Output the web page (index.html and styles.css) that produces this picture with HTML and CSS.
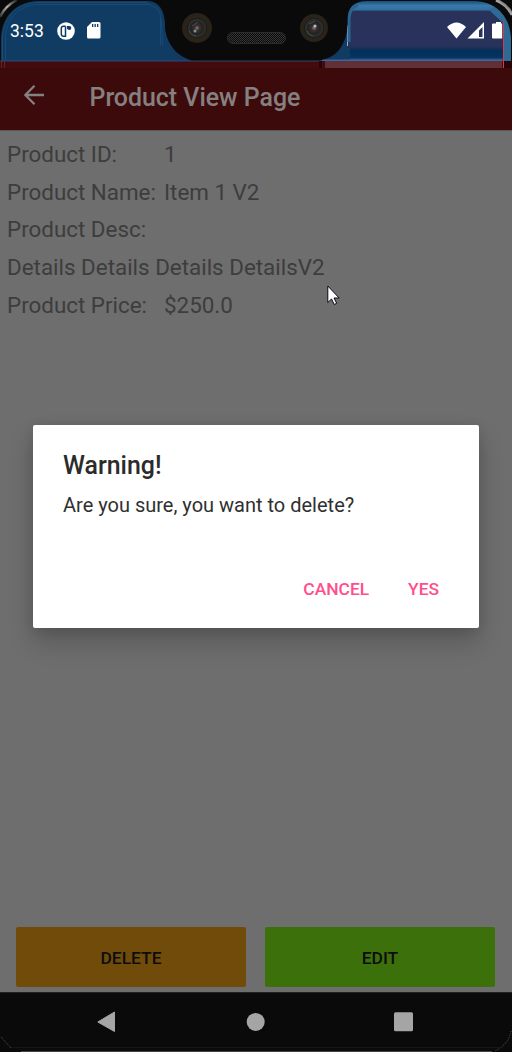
FILE: index.html
```html
<!DOCTYPE html>
<html lang="en">
<head>
<meta charset="utf-8">
<title>Product View Page</title>
<link rel="stylesheet" href="styles.css">
</head>
<body>
<div class="phone">
  <header class="status">
    <svg class="status-art" width="512" height="68" viewBox="0 0 512 68">
      <defs>
        <linearGradient id="glass" x1="0" y1="0" x2="0" y2="1">
          <stop offset="0" stop-color="#164f7e"/><stop offset=".08" stop-color="#3a7aa9"/><stop offset=".15" stop-color="#30709d"/><stop offset=".17" stop-color="#28325a"/><stop offset=".75" stop-color="#28325a"/><stop offset=".83" stop-color="#032f58"/><stop offset=".94" stop-color="#053463"/><stop offset="1" stop-color="#34689b"/>
        </linearGradient>
        <linearGradient id="rim" x1="0" y1="1" x2="1" y2="0">
          <stop offset="0" stop-color="#333"/><stop offset=".5" stop-color="#aaa"/><stop offset="1" stop-color="#222"/>
        </linearGradient>
        <radialGradient id="lens"><stop offset="0" stop-color="#8b8178"/><stop offset=".25" stop-color="#3b302e"/><stop offset=".6" stop-color="#202225"/><stop offset=".85" stop-color="#30302f"/><stop offset="1" stop-color="#111"/></radialGradient>
        <pattern id="mesh" width="2" height="2" patternUnits="userSpaceOnUse"><path fill="#363636" d="M0 0h1v1H0zM1 1h1v1H1z"/></pattern>
      </defs>
      <path fill="#0a0a0a" d="M0 0h512v68H0z"/>
      <path fill="none" stroke="url(#rim)" stroke-width="2.5" d="M0 17Q5 6 17 0"/>
      <path fill="none" stroke="url(#rim)" stroke-width="3" d="M496 0Q508 5 512 15"/>
      <path fill="#103b62" d="M1 68V38C2 17 15 2 38 1H149Q165 3 165 20V26Q166 50 192 61V68z"/>
      <path fill="none" stroke="#174b78" d="M2.500 61V38C4 17 16 3 38 2.500H146L158 9Q162 13 162.500 45M5.500 61V38C6 20 17 5 39 4.500H149M160.500 18V45"/>
      <path fill="url(#glass)" d="M320 61Q346 51 347 27V20Q348 1 367 1H474C499 2 511 19 511 40V61z"/>
      <path fill="#103b62" d="M320 61Q342 53 347 35V48H350V61z"/>
      <path fill="none" stroke="#8eb4d3" d="M347.500 25V46"/>
      <path fill="#2e6a95" d="M489 10L503 23V61H511V38Q509 15 494 7z"/>
      <path fill="none" stroke="#2a648e" stroke-width="3" d="M349 42V18Q350 7 358 5"/>
      <path fill="#430b0d" d="M0 61H512V68H0z"/>
      <path fill="#603039" d="M325 61H502V68H325z"/>
      <path fill="#2f5389" opacity=".8" d="M0 60.500H322V61.500H0z"/><path fill="#466398" d="M322 59.500H502V61H322z"/>
      <path fill="#290307" d="M319 61h3v7h-3zM504 61h8v7h-8z"/>
      <path fill="none" stroke="#d63a45" d="M503.500 22V68"/>
      <path fill="none" stroke="#60252d" d="M1.500 61v7M4.500 61v7"/>
      <path fill="#0a0a0a" d="M155 0H357Q347 4 347.500 20C348 42 338 60 317 60H196C178 60 165 43 165 23Q164 4 149 0z"/>
      <circle cx="197" cy="28" r="15" fill="#292319"/><circle cx="197" cy="28" r="10" fill="url(#lens)"/>
      <circle cx="314" cy="28" r="14" fill="#292319"/><circle cx="314" cy="28" r="10" fill="url(#lens)"/>
      <path fill="none" stroke="#4b4b4b" d="M189 31a8 8 0 0 0 7 5M192 26l6-4M307 31a8 8 0 0 0 6 5M309 24l6-3"/>
      <circle cx="195" cy="31" r="1.500" fill="#7f9195"/><circle cx="315" cy="26" r="1.500" fill="#bbb"/>
      <rect x="227.500" y="32.500" width="58" height="11" rx="5.500" fill="url(#mesh)" stroke="#2b2b2b"/>
    </svg>
    <div class="status-row">
      <span class="clock">3:53</span>
      <svg class="app-icon" width="18" height="18" viewBox="0 0 18 18"><circle cx="9" cy="9" r="8.800" fill="#fff"/><path fill="none" stroke="#103b62" stroke-width="1.500" d="M8.500 4.300H6.500Q4.300 4.300 4.300 6.500V12Q4.300 14.300 6.500 14.300H8.500V4.300"/><circle cx="12.300" cy="6" r="2" fill="#103b62"/><path fill="#103b62" d="M10 4h2v3h-2z"/></svg>
      <svg class="sd-icon" width="14" height="17" viewBox="0 0 14 17"><path fill="#fff" d="M5 0h7q1.500 0 1.500 1.500v13.500q0 1.500-1.500 1.500H1.500Q0 16.500 0 15V5z"/><path fill="#103b62" d="M5 2h1.300v3H5zM7.500 2h1.300v3H7.500zM10 2h1.300v3H10z"/></svg>
      <svg class="signals" width="56" height="18" viewBox="0 0 56 18"><path fill="#fff" d="M0 5Q9.500-4 19 5L9.500 16.500z"/><path fill="#fff" fill-rule="evenodd" d="M37 0V16.500H20.500zM35.500 5V15H32V8.500z"/><path fill="#fff" d="M46 1.500h3V0h5v1.500h1.200V16.500H46q-1 0-1-1V2.500q0-1 1-1z"/></svg>
    </div>
  </header>
  <div class="toolbar">
    <svg class="back" width="20" height="20" viewBox="0 0 20 20"><path fill="none" stroke="#858181" stroke-width="2.300" d="M20 10H1.500M10.500 .8L1.300 10l9.200 9.200"/></svg>
    <h1 class="title">Product View Page</h1>
  </div>
  <main class="content">
    <dl class="details">
      <dt>Product ID:</dt><dd>1</dd>
      <dt>Product Name:</dt><dd>Item 1 V2</dd>
      <dt class="wide">Product Desc:</dt>
      <dd class="wide">Details Details Details DetailsV2</dd>
      <dt>Product Price:</dt><dd>$250.0</dd>
    </dl>
    <div class="actions">
      <button class="btn delete">DELETE</button>
      <button class="btn edit">EDIT</button>
    </div>
  </main>
  <footer class="nav">
    <svg width="512" height="60" viewBox="0 0 512 60">
      <path fill="#a5a5a5" stroke="#a5a5a5" stroke-linejoin="round" d="M97.800 30L114.500 20V39.500z"/>
      <circle cx="255.700" cy="29.900" r="9" fill="#a5a5a5"/>
      <rect x="394" y="20.300" width="19" height="19" rx="1.500" fill="#a5a5a5"/>
      <path fill="none" stroke="#555" stroke-dasharray="1 1" d="M1 45l10 11M511 39Q509 52 495 59"/>
      <path fill="none" stroke="#161616" d="M11 55.500H503"/>
      <path fill="none" stroke="#444" d="M21 59.500H492"/>
    </svg>
  </footer>
  <section class="dialog" role="alertdialog">
    <h2 class="dialog-title">Warning!</h2>
    <p class="message">Are you sure, you want to delete?</p>
    <div class="dialog-actions"><button class="link cancel">CANCEL</button><button class="link yes">YES</button></div>
  </section>
  <svg class="cursor" width="14" height="21" viewBox="0 0 14 21"><path fill="#fff" stroke="#080818" d="M.8 1V17.500L4.500 14L7.300 19.500L9.700 18.300L7 13H12.200z"/></svg>
</div>
</body>
</html>
```
FILE: styles.css
```css
* { box-sizing: border-box; }
body { margin: 0; background: #000; font-family: Roboto, "Liberation Sans", sans-serif; }
.phone { position: relative; width: 512px; height: 1052px; display: flex; flex-direction: column; background: #6e6e6e; overflow: hidden; }
.status { position: relative; height: 68px; flex: none; }
.status-art { position: absolute; inset: 0; display: block; }
.status-row { position: relative; display: flex; align-items: center; height: 61px; padding: 0 9px; color: #fff; }
.clock { font-size: 17.500px; width: 48px; padding-left: 1px; line-height: 20px; }
.sd-icon { margin-left: 12px; }
.signals { margin-left: auto; }
.status-row svg { flex: none; }
.toolbar { height: 62px; flex: none; display: flex; align-items: center; padding: 0 24px; background: #3d0a0c; }
.back { margin-top: -8px; }
.title { margin: -3px 0 0 45.500px; color: #858181; font-size: 24.900px; font-weight: 500; line-height: 30px; white-space: nowrap; }
.content { flex: 1; display: flex; flex-direction: column; justify-content: space-between; border-top: 1px solid #5c5556; }
.details { margin: 5px 0 0 7px; display: grid; grid-template-columns: 157px 1fr; grid-auto-rows: 37.650px; font-size: 22.400px; line-height: 37px; color: #3d3d3d; white-space: nowrap; }
.details dd { margin: 0; }
.wide { grid-column: 1 / -1; }
.actions { display: flex; gap: 19px; padding: 0 17px 5px 16px; }
.btn { flex: 1; height: 60px; border: 0; border-radius: 2px; font: 500 17.400px Roboto, sans-serif; color: #0d0d0d; padding: 2px 0 0; }
.delete { background: #704b0a; }
.edit { background: #3c700b; }
.nav { height: 60px; flex: none; background: #0a0a0a; border-top: 1px solid #222; }
.nav svg { display: block; margin-top: -1px; }
.dialog { position: absolute; left: 33px; top: 425px; width: 445.600px; height: 202.600px; padding: 25px 30px; border-radius: 2px; background: #fff; box-shadow: 0 14px 26px rgba(0,0,0,.2), 0 2px 12px rgba(0,0,0,.1); display: flex; flex-direction: column; }
.dialog-title { margin: 0; font-size: 24.900px; font-weight: 500; line-height: 31px; color: #2b2b2b; }
.message { margin: 9px 0 0; font-size: 20px; line-height: 30px; color: #303030; white-space: nowrap; }
.dialog-actions { margin-top: auto; display: flex; justify-content: flex-end; gap: 39px; padding: 0 9.500px 4px; }
.link { border: 0; padding: 0; background: none; font: 500 17.400px/20px Roboto, sans-serif; color: #ff4f8b; }
.cursor { position: absolute; left: 327px; top: 285px; }
```
